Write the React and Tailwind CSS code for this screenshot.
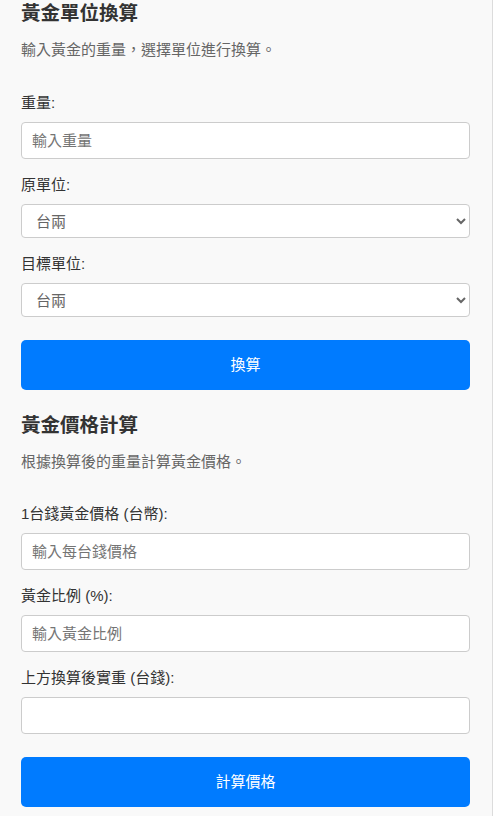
import React from "react";

const font = { fontFamily: '"Liberation Sans", "Noto Sans CJK TC", sans-serif' };

const Label = ({ children }) => (
  <label className="block text-[15px] leading-[22px] text-[#333] mb-2">{children}</label>
);

const TextInput = ({ placeholder }) => (
  <input
    type="text"
    placeholder={placeholder}
    className="block w-full h-[37px] px-[10px] text-[15px] text-[#333] bg-white border border-[#ccc] rounded-[4px] placeholder:text-[#757575] outline-none"
  />
);

const UnitSelect = () => (
  <select className="block w-full h-[34px] px-[10px] text-[15px] text-[#666] bg-white border border-[#ccc] rounded-[4px] outline-none">
    <option>台兩</option>
    <option>台錢</option>
    <option>公克</option>
    <option>盎司</option>
  </select>
);

const App = () => {
  return (
    <div className="min-h-screen bg-[#f9f9f9] border-r border-[#dcdcdc]" style={font}>
      <div className="pl-[21px] pr-[22px] pt-px pb-4">
        {/* 單位換算 */}
        <h2 className="text-[19.5px] leading-6 font-bold text-[#333]">黃金單位換算</h2>
        <p className="mt-[14px] text-[15px] leading-[22px] text-[#666]">輸入黃金的重量，選擇單位進行換算。</p>

        <div className="mt-[31px] mb-[15px]">
          <Label>重量:</Label>
          <TextInput placeholder="輸入重量" />
        </div>
        <div className="mb-[15px]">
          <Label>原單位:</Label>
          <UnitSelect />
        </div>
        <div className="mb-[15px]">
          <Label>目標單位:</Label>
          <UnitSelect />
        </div>
        <button className="mt-2 w-full h-[50px] bg-[#007bff] text-white text-[15px] rounded-[5px]">換算</button>

        {/* 價格計算 */}
        <h2 className="mt-[23px] text-[19.5px] leading-6 font-bold text-[#333]">黃金價格計算</h2>
        <p className="mt-[14px] text-[15px] leading-[22px] text-[#666]">根據換算後的重量計算黃金價格。</p>

        <div className="mt-[30px] mb-[15px]">
          <Label>1台錢黃金價格 (台幣):</Label>
          <TextInput placeholder="輸入每台錢價格" />
        </div>
        <div className="mb-[15px]">
          <Label>黃金比例 (%):</Label>
          <TextInput placeholder="輸入黃金比例" />
        </div>
        <div className="mb-[15px]">
          <Label>上方換算後實重 (台錢):</Label>
          <TextInput placeholder="" />
        </div>
        <button className="mt-2 w-full h-[50px] bg-[#007bff] text-white text-[15px] rounded-[5px]">計算價格</button>
      </div>
    </div>
  );
};

export default App;
